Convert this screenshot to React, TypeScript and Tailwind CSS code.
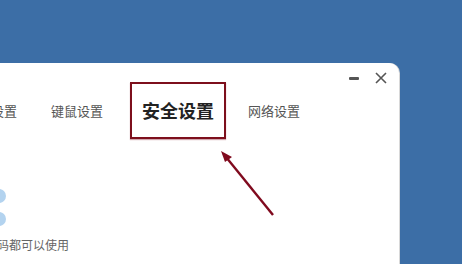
import React from 'react';

const font = { fontFamily: '"Noto Sans CJK SC", "Noto Sans", sans-serif' };

export default function App() {
  return (
    <div className="relative h-[264px] w-[462px] overflow-hidden bg-[#3c6ea6] pt-[63px]" style={font}>
      {/* Window */}
      <div className="relative h-[220px] w-[399px] rounded-tr-[10px] bg-white shadow-[1px_0_0_#d8d8d8]">
        {/* Title bar controls */}
        <div className="absolute right-[12px] top-[9px] flex items-center gap-[16px] text-[#555]">
          <div className="h-[3px] w-[10px] rounded-[1px] bg-[#555]" />
          <svg width="12" height="12" viewBox="0 0 12 12">
            <path d="M1 1L11 11M11 1L1 11" stroke="#555" strokeWidth="1.6" />
          </svg>
        </div>

        {/* Tabs */}
        <div className="flex items-center pt-[19px]">
          <span className="ml-[-9px] text-[13px] text-[#555]">设置</span>
          <span className="ml-[34px] text-[13px] text-[#555]">键鼠设置</span>
          <div className="ml-[27px] flex h-[57px] w-[96px] items-center justify-center border-2 border-[#7d0f1c] shadow-[0_1px_1px_rgba(120,0,20,0.35)]">
            <span className="text-[18px] font-bold text-[#222]">安全设置</span>
          </div>
          <span className="ml-[22px] text-[13px] text-[#555]">网络设置</span>
        </div>

        {/* Partial content */}
        <div className="mt-[50px] flex flex-col gap-[9px]">
          <div className="ml-[-8px] h-[14px] w-[14px] rounded-full bg-[#b3d3ef]" />
          <div className="ml-[-8px] h-[14px] w-[14px] rounded-full bg-[#b3d3ef]" />
        </div>
        <div className="ml-[-3px] mt-[10px] text-[12px] text-[#666]">码都可以使用</div>
      </div>

      {/* Annotation arrow */}
      <svg className="absolute left-0 top-0" width="462" height="264" viewBox="0 0 462 264">
        <line x1="273" y1="215" x2="226" y2="157" stroke="#800a1e" strokeWidth="2.4" />
        <polygon points="221,151 232,157 225,162" fill="#800a1e" />
      </svg>
    </div>
  );
}
